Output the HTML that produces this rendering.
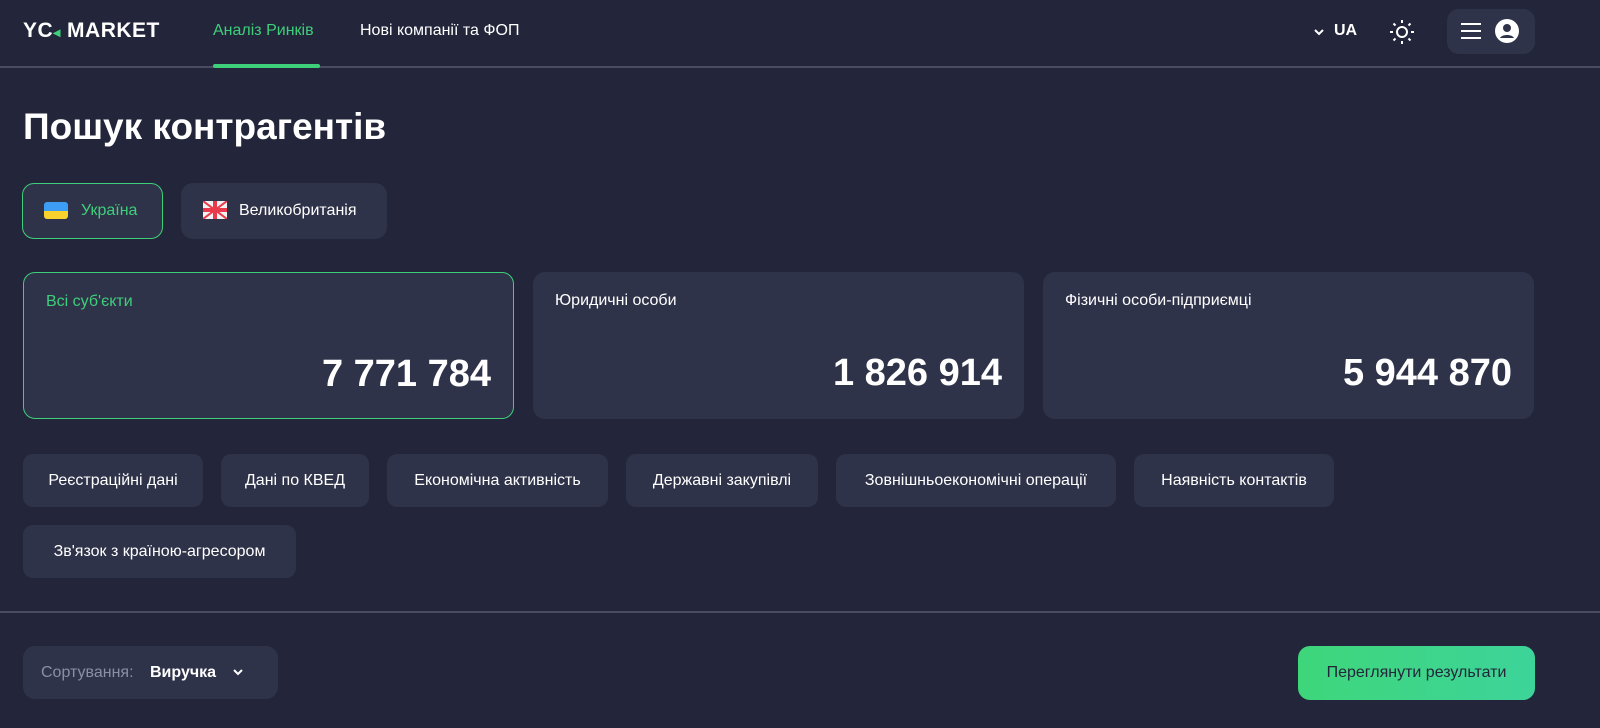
<!DOCTYPE html>
<html><head><meta charset="utf-8"><style>
*{box-sizing:border-box;margin:0;padding:0}
body{width:1600px;height:728px;background:#23263a;font-family:"Liberation Sans",sans-serif;color:#fff;position:relative;overflow:hidden}
.abs{position:absolute}
.hdr{left:0;top:0;width:1600px;height:68px;border-bottom:2px solid #4a4d60}
.logo{left:23px;top:19px;font-weight:700;font-size:21px;letter-spacing:0.5px}
.nav{top:22px;font-size:16px}
.box{background:#2f3349;border-radius:12px}
.chip{position:absolute;top:454px;height:53px;background:#2f3349;border-radius:10px;font-size:16px;line-height:53px;text-align:center}
.card{position:absolute;top:272px;height:147px;width:491px;background:#2f3349;border-radius:12px}
.card .l{position:absolute;left:22px;top:20px;font-size:16px}
.card .n{position:absolute;right:22px;top:80px;font-size:38px;font-weight:700}
</style></head><body>
<div class="abs hdr"></div>
<div class="abs logo">YC<span style="color:#3ecf7a;font-size:14px">◂</span> MARKET</div>
<div class="abs nav" style="left:213px;color:#3ecf7a">Аналіз Ринків</div>
<div class="abs" style="left:213px;top:64px;width:107px;height:4px;background:#3ecf7a;border-radius:2px"></div>
<div class="abs nav" style="left:360px">Нові компанії та ФОП</div>
<svg class="abs" style="left:1312px;top:26px" width="14" height="12" viewBox="0 0 14 12"><path d="M3 4l4 4 4-4" stroke="#fff" stroke-width="2" fill="none"/></svg>
<div class="abs nav" style="left:1334px;top:22px;font-weight:700">UA</div>
<svg class="abs" style="left:1388px;top:18px" width="28" height="28" viewBox="0 0 28 28" stroke="#fff" stroke-width="2" fill="none"><circle cx="14" cy="14" r="5"/><path d="M14 2v3M14 23v3M2 14h3M23 14h3M5.5 5.5l2 2M20.5 20.5l2 2M5.5 22.5l2-2M20.5 7.5l2-2"/></svg>
<div class="abs box" style="left:1447px;top:9px;width:88px;height:45px"></div>
<svg class="abs" style="left:1460px;top:21px" width="22" height="20" viewBox="0 0 22 20" stroke="#fff" stroke-width="2"><path d="M1 3h20M1 10h20M1 17h20"/></svg>
<svg class="abs" style="left:1495px;top:19px" width="24" height="24" viewBox="0 0 24 24"><circle cx="12" cy="12" r="12" fill="#fff"/><circle cx="12" cy="9" r="4" fill="#2f3349"/><path d="M5 19c2-4 12-4 14 0z" fill="#2f3349"/></svg>
<div class="abs" style="left:23px;top:106px;font-size:37px;font-weight:700">Пошук контрагентів</div>
<div class="abs box" style="left:22px;top:183px;width:141px;height:56px;border:1.5px solid #3ecf7a"></div>
<div class="abs" style="left:44px;top:202px;width:24px;height:17px;border-radius:3px;overflow:hidden"><div style="height:50%;background:#3d9df5"></div><div style="height:50%;background:#fad22d"></div></div>
<div class="abs" style="left:81px;top:202px;font-size:16px;color:#3ecf7a">Україна</div>
<div class="abs box" style="left:181px;top:183px;width:206px;height:56px"></div>
<svg class="abs" style="left:203px;top:201px" width="24" height="18" viewBox="0 0 24 18"><rect width="24" height="18" fill="#f2f2f2"/><path d="M0 0L24 18M24 0L0 18" stroke="#e83a4a" stroke-width="2"/><rect x="10" width="4" height="18" fill="#e83a4a"/><rect y="7" width="24" height="4" fill="#e83a4a"/></svg>
<div class="abs" style="left:239px;top:202px;font-size:16px">Великобританія</div>
<div class="card" style="left:23px;border:1.5px solid #3ecf7a"><div class="l" style="color:#3ecf7a">Всі суб'єкти</div><div class="n">7 771 784</div></div>
<div class="card" style="left:533px"><div class="l">Юридичні особи</div><div class="n">1 826 914</div></div>
<div class="card" style="left:1043px"><div class="l">Фізичні особи-підприємці</div><div class="n">5 944 870</div></div>
<div class="chip" style="left:23px;width:180px">Реєстраційні дані</div>
<div class="chip" style="left:221px;width:148px">Дані по КВЕД</div>
<div class="chip" style="left:387px;width:221px">Економічна активність</div>
<div class="chip" style="left:626px;width:192px">Державні закупівлі</div>
<div class="chip" style="left:836px;width:280px">Зовнішньоекономічні операції</div>
<div class="chip" style="left:1134px;width:200px">Наявність контактів</div>
<div class="chip" style="left:23px;top:525px;width:273px">Зв'язок з країною-агресором</div>
<div class="abs" style="left:0;top:611px;width:1600px;height:2px;background:#4a4d60"></div>
<div class="abs box" style="left:23px;top:646px;width:255px;height:53px"></div>
<div class="abs" style="left:41px;top:664px;font-size:16px;color:#8a8fa3">Сортування:</div>
<div class="abs" style="left:150px;top:664px;font-size:16px;font-weight:700">Виручка</div>
<svg class="abs" style="left:231px;top:666px" width="14" height="12" viewBox="0 0 14 12"><path d="M3 4l4 4 4-4" stroke="#fff" stroke-width="2" fill="none"/></svg>
<div class="abs" style="left:1298px;top:646px;width:237px;height:54px;border-radius:12px;background:linear-gradient(90deg,#3ed67a,#3dd49a);color:#23263a;font-size:16px;line-height:54px;text-align:center">Переглянути результати</div>
</body></html>
